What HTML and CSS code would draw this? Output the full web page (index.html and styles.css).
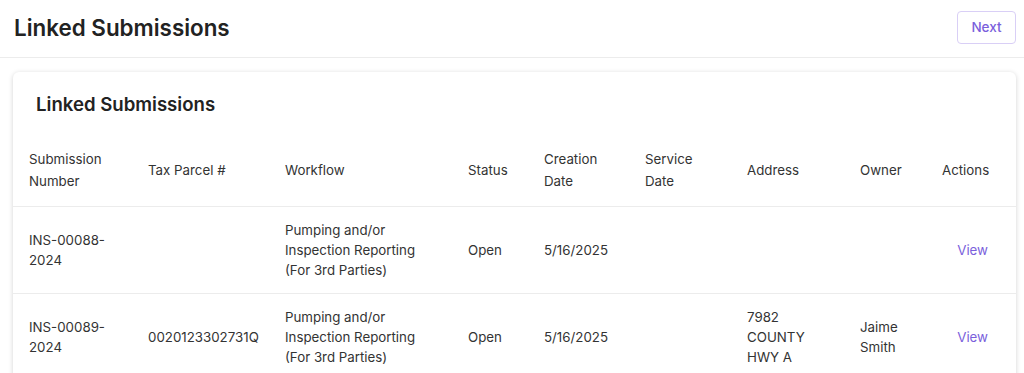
FILE: index.html
```html
<!DOCTYPE html>
<html>
<head>
<meta charset="utf-8">
<link rel="stylesheet" href="styles.css">
</head>
<body>
<header class="topbar">
  <h1 class="page-title">Linked Submissions</h1>
  <button class="btn-next">Next</button>
</header>
<section class="card">
  <h2 class="card-title">Linked Submissions</h2>
  <table class="grid">
    <colgroup>
      <col class="c-num"><col class="c-tax"><col class="c-wf"><col class="c-status"><col class="c-cdate"><col class="c-sdate"><col class="c-addr"><col class="c-owner"><col class="c-act">
    </colgroup>
    <thead>
      <tr>
        <th>Submission Number</th>
        <th>Tax Parcel #</th>
        <th>Workflow</th>
        <th>Status</th>
        <th>Creation Date</th>
        <th>Service Date</th>
        <th>Address</th>
        <th>Owner</th>
        <th class="act">Actions</th>
      </tr>
    </thead>
    <tbody>
      <tr>
        <td>INS-00088-2024</td>
        <td></td>
        <td>Pumping and/or Inspection Reporting (For 3rd Parties)</td>
        <td>Open</td>
        <td>5/16/2025</td>
        <td></td>
        <td></td>
        <td></td>
        <td class="act"><a class="view" href="#">View</a></td>
      </tr>
      <tr>
        <td>INS-00089-2024</td>
        <td>0020123302731Q</td>
        <td>Pumping and/or Inspection Reporting (For 3rd Parties)</td>
        <td>Open</td>
        <td>5/16/2025</td>
        <td></td>
        <td>7982 COUNTY HWY A</td>
        <td>Jaime Smith</td>
        <td class="act"><a class="view" href="#">View</a></td>
      </tr>
    </tbody>
  </table>
</section>
</body>
</html>
```
FILE: styles.css
```css
* { box-sizing: border-box; }
html, body { margin: 0; padding: 0; background: #fff; }
body {
  font-family: Inter, "Noto Sans", sans-serif;
  color: #2b2b2b;
  overflow: hidden;
}
.topbar {
  height: 58px;
  display: flex;
  align-items: center;
  justify-content: space-between;
  padding: 0 8px 3px 14px;
  border-bottom: 1px solid #ececec;
}
.page-title {
  margin: 0;
  font-size: 22.4px;
  font-weight: 600;
  color: #222;
}
.btn-next {
  height: 33px;
  width: 59px;
  padding: 0;
  background: #fff;
  border: 1px solid #d9cff6;
  border-radius: 4px;
  color: #7b5fdc;
  font-family: inherit;
  font-size: 13.5px;
  font-weight: 500;
}
.card {
  margin: 14px 8px 0 13px;
  border-radius: 6px;
  box-shadow: 0 1px 5px rgba(0,0,0,0.18);
  padding-top: 20px;
  background: #fff;
}
.card-title {
  margin: 0 0 18px 23px;
  font-size: 18.6px;
  line-height: 24px;
  font-weight: 600;
  color: #222;
}
.grid {
  width: 100%;
  table-layout: fixed;
  border-collapse: collapse;
  font-size: 13.3px;
}
.c-num { width: 119px; }
.c-tax { width: 137px; }
.c-wf { width: 183px; }
.c-status { width: 76px; }
.c-cdate { width: 101px; }
.c-sdate { width: 102px; }
.c-addr { width: 113px; }
.c-owner { width: 82px; }
.c-act { width: 90px; }
.grid th {
  text-align: left;
  font-weight: 400;
  line-height: 22px;
  padding: 14px 16px;
  color: #333;
  border-bottom: 1px solid #ececec;
  vertical-align: middle;
}
.grid td {
  line-height: 20px;
  padding: 13px 16px;
  color: #333;
  border-bottom: 1px solid #ececec;
  vertical-align: middle;
}
.grid .act {
  text-align: right;
  padding-right: 28px;
}
.view {
  color: #7b5fdc;
  text-decoration: none;
}
```
